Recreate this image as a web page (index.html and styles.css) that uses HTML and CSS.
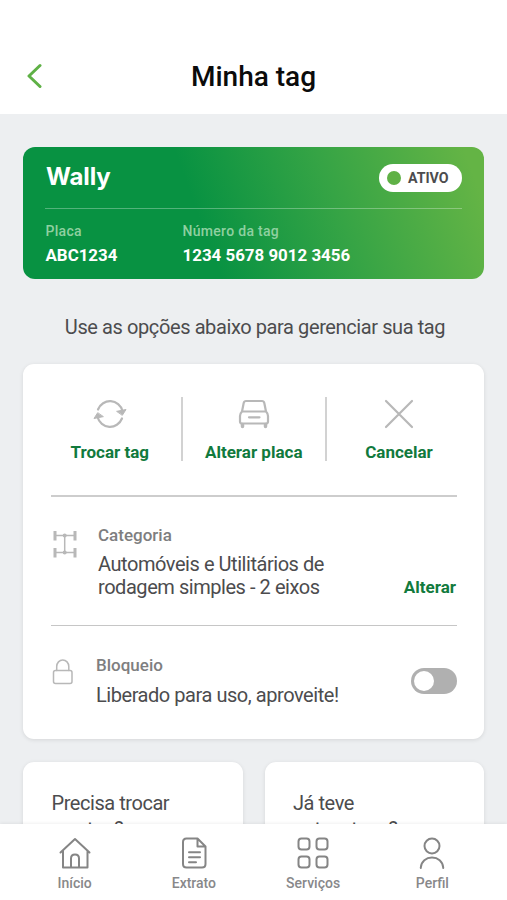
FILE: index.html
```
<!DOCTYPE html>
<html lang="pt-BR">
<head>
    <meta charset="UTF-8">
    <meta name="viewport" content="width=device-width, initial-scale=1.0">
    <title>Minha tag</title>
    <link rel="stylesheet" href="styles.css">
</head>
<body>
<header class="header">
    <svg class="back" width="16" height="26" viewBox="0 0 16 26"><path d="M14 2.500 3 13l11 10.500"/></svg>
    <h1>Minha tag</h1>
</header>

<main class="content">
    <!-- Cartão da tag -->
    <section class="tag-card">
        <div class="tag-top">
            <span class="brand">Wally</span>
            <span class="status"><i class="dot"></i>ATIVO</span>
        </div>
        <div class="tag-info">
            <div class="tag-field plate">
                <span>Placa</span>
                <strong>ABC1234</strong>
            </div>
            <div class="tag-field">
                <span>Número da tag</span>
                <strong>1234 5678 9012 3456</strong>
            </div>
        </div>
    </section>

    <p class="hint">Use as opções abaixo para gerenciar sua tag</p>

    <section class="card">
        <div class="actions">
            <a class="action">
                <svg width="34" height="30" viewBox="0 0 34 30">
                    <path d="M5 10.500A13 13.500 0 0 1 29.500 12M29 19.500A13 13.500 0 0 1 4.500 18"/>
                    <path class="fill" d="M24 12.300 33 10.500 29.500 16ZM10 17.700 1 19.500 4.500 14Z"/>
                </svg>
                Trocar tag
            </a>
            <a class="action">
                <svg width="32" height="30" viewBox="0 0 32 30">
                    <path d="M4 12.500 5.700 4Q6.200 2 8 2H24Q25.800 2 26.300 4L28 12.500M4 12.500H28Q30 14.500 30 17V22.500Q30 24.500 28 24.500H4Q2 24.500 2 22.500V17Q2 14.500 4 12.500ZM11 18.300H21.500"/>
                    <path class="wheel" d="M4.500 25.500V27.500M27.500 25.500V27.500"/>
                </svg>
                Alterar placa
            </a>
            <a class="action">
                <svg width="30" height="30" viewBox="0 0 30 30"><path d="M2 2 28 28M28 2 2 28"/></svg>
                Cancelar
            </a>
        </div>

        <div class="row category">
            <svg class="row-icon" width="24" height="28" viewBox="0 0 24 28">
                <path d="M2 5.500H22M2 22.500H22M11.700 5.500V22.500"/>
                <path class="tires" d="M2 1V10.500M22 1V10.500M2 18V27.500M22 18V27.500"/>
                <circle cx="11.700" cy="5.500" r="2"/>
                <circle cx="11.700" cy="22.500" r="2"/>
            </svg>
            <div class="row-text">
                <h2>Categoria</h2>
                <p>Automóveis e Utilitários de<br>rodagem simples - 2 eixos</p>
            </div>
            <a class="link">Alterar</a>
        </div>

        <div class="row block">
            <svg class="row-icon" width="22" height="26" viewBox="0 0 22 26">
                <rect x="1.500" y="11.500" width="18.500" height="13" rx="2"/>
                <path d="M4.700 11.500V7.500A6 6.500 0 0 1 16.800 7.500V11.500"/>
            </svg>
            <div class="row-text">
                <h2>Bloqueio</h2>
                <p>Liberado para uso, aproveite!</p>
            </div>
            <span class="switch"></span>
        </div>
    </section>

    <div class="questions">
        <div class="question">Precisa trocar<br>sua tag?</div>
        <div class="question">Já teve<br>outras tags?</div>
    </div>
</main>

<nav class="navbar">
    <a class="nav-item">
        <svg width="32" height="32" viewBox="0 0 32 32"><path d="M1.500 15.500 16 2 30.500 15.500M4 13.500V30.500H28.500V13.500M12 30.500V21.500Q12 17.500 16 17.500T20 21.500V30.500"/></svg>
        Início
    </a>
    <a class="nav-item">
        <svg width="32" height="32" viewBox="0 0 32 32"><path d="M19.500 1.500H8.500Q5 1.500 5 5V27Q5 30.500 8.500 30.500H24Q27.500 30.500 27.500 27V9.500L19.500 1.500V9.500H27.500M11 15.300H22M11 20.300H22M11 25.300H18"/></svg>
        Extrato
    </a>
    <a class="nav-item">
        <svg width="32" height="32" viewBox="0 0 32 32">
            <rect x="1.500" y="1.500" width="11" height="11" rx="3"/>
            <rect x="19.500" y="1.500" width="11" height="11" rx="3"/>
            <rect x="1.500" y="19.500" width="11" height="11" rx="3"/>
            <rect x="19.500" y="19.500" width="11" height="11" rx="3"/>
        </svg>
        Serviços
    </a>
    <a class="nav-item">
        <svg width="32" height="32" viewBox="0 0 32 32"><circle cx="16" cy="9" r="7.500"/><path d="M4.800 31V30.500C5.300 24.300 10 20.500 16 20.500S26.700 24.300 27.200 30.500V31"/></svg>
        Perfil
    </a>
</nav>
</body>
</html>
```
FILE: styles.css
```
* {
    box-sizing: border-box;
}

body {
    margin: 0;
    height: 100vh;
    display: flex;
    flex-direction: column;
    overflow: hidden;
    background: #edeff1;
    color: #4c4c4e;
    font-family: Roboto, sans-serif;
}

h1, h2, p {
    margin: 0;
}

svg {
    display: block;
    fill: none;
    stroke: #b8b8b8;
    stroke-width: 2.2;
    stroke-linecap: round;
    stroke-linejoin: round;
}

.header {
    flex: none;
    height: 114px;
    padding: 38px 26px 0;
    display: grid;
    grid-template-columns: 16px 1fr 16px;
    align-items: center;
    background: #fff;
}

.header h1 {
    text-align: center;
    font-size: 28px;
    font-weight: 500;
    color: #0b0b0b;
}

.back {
    stroke: #5fb146;
    stroke-width: 3;
}

.content {
    flex: 1;
    min-height: 0;
    overflow: hidden;
    padding: 33px 23px 0;
}

.tag-card {
    height: 132px;
    padding: 0 22px;
    border-radius: 12px;
    background: linear-gradient(70deg, #089242 39%, #36a445 67%, #64b445 96%);
    color: #fff;
}

.tag-top {
    height: 62px;
    display: flex;
    align-items: center;
    justify-content: space-between;
    border-bottom: 1px solid rgba(255, 255, 255, 0.3);
}

.brand {
    padding: 0 0 1px 1px;
    font-family: Inter, sans-serif;
    font-size: 24px;
    font-weight: 700;
    line-height: 30px;
    letter-spacing: -0.1px;
}

.status {
    display: flex;
    align-items: center;
    gap: 7px;
    width: 83px;
    height: 28px;
    padding-left: 8px;
    border-radius: 14px;
    background: #fff;
    color: #4c4c4e;
    font-size: 14.200px;
    font-weight: 700;
}

.dot {
    width: 14px;
    height: 14px;
    border-radius: 50%;
    background: #5fb146;
}

.tag-info {
    display: flex;
    padding: 11px 0 0 0.5px;
}

.plate {
    width: 137px;
}

.tag-field span {
    display: block;
    line-height: 22px;
    font-size: 14px;
    font-weight: 500;
    letter-spacing: 0.300px;
    color: #8fd0a0;
}

.tag-field strong {
    display: block;
    padding-top: 1px;
    line-height: 25px;
    font-size: 16.900px;
    font-weight: 700;
}

.hint {
    margin-top: 36px;
    padding-left: 3px;
    line-height: 25px;
    font-size: 20px;
    letter-spacing: -0.4px;
    text-align: center;
}

.card,
.question {
    background: #fff;
    border-radius: 11px;
    box-shadow: 0 1px 4px rgba(0, 0, 0, 0.1);
}

.card {
    height: 375px;
    margin-top: 24px;
    padding: 0 27px 0 28px;
}

.actions {
    display: grid;
    grid-template-columns: 129.500px 146.500px 130px;
    height: 133px;
    padding-top: 33px;
    border-bottom: 2px solid #cdcdcd;
}

.action {
    height: 64px;
    padding-top: 2px;
    display: flex;
    flex-direction: column;
    align-items: center;
    gap: 11px;
    line-height: 24px;
    font-size: 17px;
    font-weight: 700;
    color: #117a3d;
    white-space: nowrap;
}

.action svg {
    flex: none;
}

.action:first-child {
    padding-right: 12px;
}

.action:nth-child(2) {
    border: solid #d2d2d2;
    border-width: 0 2px;
}

.action:last-child {
    padding-left: 14px;
}

.action .fill {
    fill: #b8b8b8;
    stroke-width: 1;
}

.action .wheel {
    stroke-width: 3.500;
}

.row {
    display: flex;
}

.row-icon {
    flex: none;
    stroke-width: 1.500;
}

.row-icon .tires {
    stroke-width: 3;
    stroke-linecap: butt;
}

.row-icon circle {
    fill: #b8b8b8;
    stroke: none;
}

.row-text {
    flex: 1;
}

.row h2 {
    line-height: 22px;
    font-size: 17px;
    font-weight: 500;
    color: #7e7e80;
}

.row p {
    font-size: 20px;
    letter-spacing: -0.45px;
}

.category {
    height: 129px;
    padding-top: 27px;
    border-bottom: 1px solid #c6c6c6;
}

.category .row-icon {
    margin: 6px 21px 0 2px;
}

.category p {
    padding-top: 7px;
    line-height: 22.500px;
}

.link {
    align-self: flex-start;
    margin: 52px 1px 0 0;
    line-height: 22px;
    font-size: 17px;
    font-weight: 700;
    color: #117a3d;
}

.block {
    padding-top: 28px;
}

.block .row-icon {
    margin: 5px 22px 0 1px;
}

.block p {
    padding-top: 8px;
    line-height: 22px;
}

.switch {
    width: 46px;
    height: 26px;
    margin-top: 14px;
    padding: 3px;
    border-radius: 13px;
    background: #b0b0b0;
}

.switch::before {
    content: "";
    display: block;
    width: 20px;
    height: 20px;
    border-radius: 50%;
    background: #fff;
}

.questions {
    display: grid;
    grid-template-columns: 1fr 1fr;
    gap: 22px;
    margin-top: 23px;
}

.question {
    height: 130px;
    padding: 28px 28.500px;
    line-height: 26px;
    font-size: 20px;
    letter-spacing: -0.45px;
}

.navbar {
    flex: none;
    height: 76px;
    padding: 13px 15px 0;
    display: grid;
    grid-template-columns: repeat(4, 1fr);
    background: #fff;
    box-shadow: 0 -1px 3px rgba(0, 0, 0, 0.06);
    z-index: 1;
}

.nav-item {
    display: flex;
    flex-direction: column;
    align-items: center;
    gap: 4px;
    line-height: 21px;
    font-size: 14px;
    font-weight: 500;
    color: #88888a;
}

.nav-item svg {
    stroke: #858585;
    stroke-width: 2;
}
```
